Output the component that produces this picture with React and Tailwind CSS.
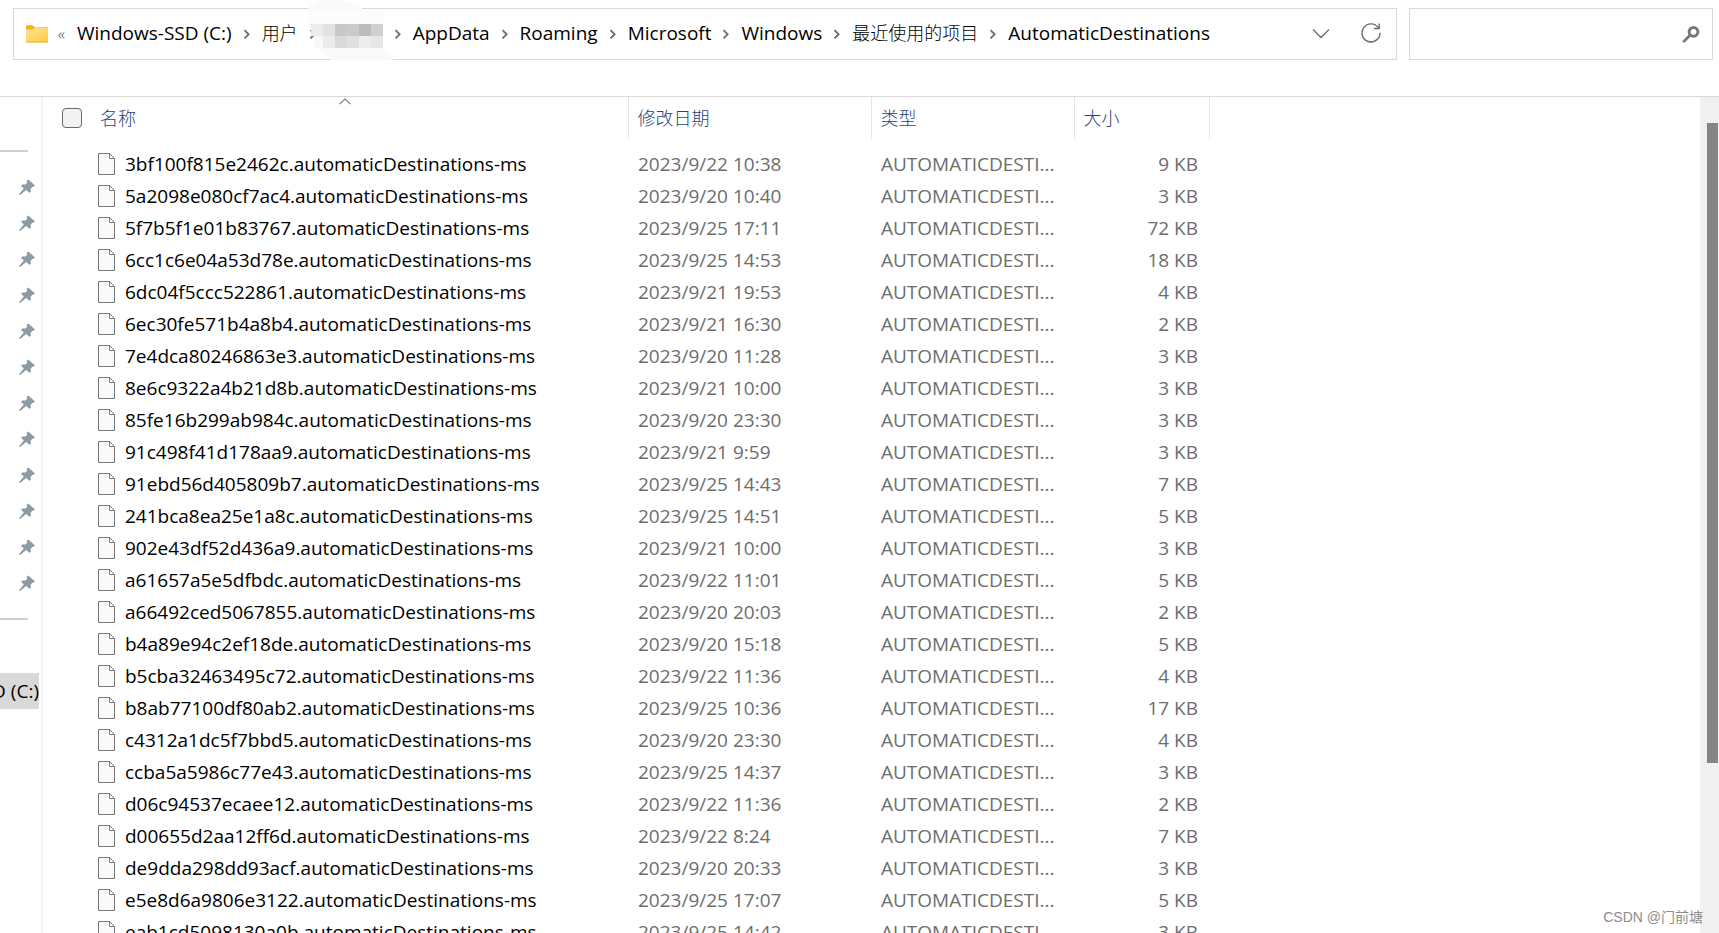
const files = [
  ['3bf100f815e2462c', '2023/9/22 10:38', 9],
  ['5a2098e080cf7ac4', '2023/9/20 10:40', 3],
  ['5f7b5f1e01b83767', '2023/9/25 17:11', 72],
  ['6cc1c6e04a53d78e', '2023/9/25 14:53', 18],
  ['6dc04f5ccc522861', '2023/9/21 19:53', 4],
  ['6ec30fe571b4a8b4', '2023/9/21 16:30', 2],
  ['7e4dca80246863e3', '2023/9/20 11:28', 3],
  ['8e6c9322a4b21d8b', '2023/9/21 10:00', 3],
  ['85fe16b299ab984c', '2023/9/20 23:30', 3],
  ['91c498f41d178aa9', '2023/9/21 9:59', 3],
  ['91ebd56d405809b7', '2023/9/25 14:43', 7],
  ['241bca8ea25e1a8c', '2023/9/25 14:51', 5],
  ['902e43df52d436a9', '2023/9/21 10:00', 3],
  ['a61657a5e5dfbdc', '2023/9/22 11:01', 5],
  ['a66492ced5067855', '2023/9/20 20:03', 2],
  ['b4a89e94c2ef18de', '2023/9/20 15:18', 5],
  ['b5cba32463495c72', '2023/9/22 11:36', 4],
  ['b8ab77100df80ab2', '2023/9/25 10:36', 17],
  ['c4312a1dc5f7bbd5', '2023/9/20 23:30', 4],
  ['ccba5a5986c77e43', '2023/9/25 14:37', 3],
  ['d06c94537ecaee12', '2023/9/22 11:36', 2],
  ['d00655d2aa12ff6d', '2023/9/22 8:24', 7],
  ['de9dda298dd93acf', '2023/9/20 20:33', 3],
  ['e5e8d6a9806e3122', '2023/9/25 17:07', 5],
  ['eab1cd5098130a0b', '2023/9/25 14:42', 3],
];

const pins = Array.from({ length: 12 }, (_, i) => i);

function FolderIcon() {
  return (
    <svg width="22" height="18" viewBox="0 0 22 18" className="shrink-0" aria-hidden="true">
      <defs>
        <linearGradient id="folder" x1="0" y1="0" x2="1" y2="1">
          <stop offset="0" stopColor="#ffe69c" />
          <stop offset="1" stopColor="#ffc93c" />
        </linearGradient>
      </defs>
      <path d="M0 1.2Q0 .3 1 .3h5.6l2 1.9H22v4H0z" fill="#f8b31a" />
      <path d="M0 4.6h7L9 2.8h13v14.4H0z" fill="url(#folder)" />
      <path d="M0 16.5h22v1H0z" fill="#eeae25" />
    </svg>
  );
}

function Chevron() {
  return (
    <svg width="8" height="12" viewBox="0 0 8 12" className="shrink-0" aria-hidden="true">
      <path d="M1.5 2.2 5.6 6.3 1.5 10.4" fill="none" stroke="#6e6e6e" strokeWidth="1.9" />
    </svg>
  );
}

function PinIcon() {
  return (
    <svg width="16" height="16" viewBox="0 0 16 16" aria-hidden="true">
      <path
        d="M9.2.5 15.6 6l-.5 1.6-2 .3-1.5 2.1.3 2.6-1.4 1.5-3.2-3.2L1 15.9H.2v-1L4.8 9.4 2 6.7l1.3-1.3 3 .2 1.7-1.6-.1-2.5z"
        fill="#8f9ba3"
      />
    </svg>
  );
}

function FileIcon() {
  return (
    <svg width="18" height="22" viewBox="0 0 18 22" className="shrink-0" aria-hidden="true">
      <path d="M.5.5h11l5 5v16H.5z" fill="#fafafa" stroke="#787878" />
      <path d="M11.5.5v5h5" fill="none" stroke="#787878" />
    </svg>
  );
}

function RedactedName() {
  const top = ['#ececec', '#e2e2e2', '#c8c8c8', '#cacaca', '#bcbcbc', '#d0d0d0'];
  const bottom = ['#f8f8f8', '#ececec', '#dadada', '#e0e0e0', '#ededed', '#e6e6e6'];
  return (
    <svg
      width="90"
      height="62"
      viewBox="306 0 90 62"
      className="absolute -top-4 -left-1"
      aria-hidden="true"
    >
      <path d="M309 12V9Q312 3 321 0h22q12 3 20 8l1 4h22v12h-74z" fill="#fcfcfc" />
      <path d="M309 12V9Q312 3 321 0h22q12 3 20 8l1 4z" fill="#fafafa" />
      <path d="M315 36h69v12l10 10v2h-62q-12-6-17-24z" fill="#fafafa" />
      {top.map((c, i) => (
        <rect key={i} x={312 + i * 12} y="24" width="12" height="12" fill={c} />
      ))}
      {bottom.map((c, i) => (
        <rect key={i} x={i === 0 ? 316 : 312 + i * 12} y="36" width={i === 0 ? 8 : 12} height="12" fill={c} />
      ))}
    </svg>
  );
}

function Crumb({ cjk, children }) {
  return (
    <li className="flex items-center gap-[11px]">
      <Chevron />
      <a href="#" className={cjk ? 'pb-0.5 text-[18px] font-light whitespace-nowrap' : 'pb-0.5 whitespace-nowrap'}>
        {children}
      </a>
    </li>
  );
}

export default function App() {
  return (
    <div className="flex h-screen flex-col overflow-hidden bg-white font-['Open_Sans','Noto_Sans_CJK_SC',sans-serif] text-[19px] leading-7 text-black">
      <header className="flex shrink-0 gap-3 border-b border-[#d9d9d9] pt-2 pr-1.5 pb-9 pl-[13px]">
        <nav aria-label="路径" className="flex h-[52px] min-w-0 flex-1 items-center border border-[#d9d9d9] pr-[15px] pl-3">
          <FolderIcon />
          <span className="ml-2.5 text-[16px] leading-5 font-light text-[#444]">«</span>
          <ol className="ml-3 flex items-center gap-[11px]">
            <li className="flex items-center"><a href="#" className="pb-0.5 whitespace-nowrap">Windows-SSD (C:)</a></li>
            <Crumb cjk>用户</Crumb>
            <li className="relative flex h-9 w-[74px] items-center">
              <Chevron />
              <RedactedName />
            </li>
            <Crumb>AppData</Crumb>
            <Crumb>Roaming</Crumb>
            <Crumb>Microsoft</Crumb>
            <Crumb>Windows</Crumb>
            <Crumb cjk>最近使用的项目</Crumb>
            <Crumb>AutomaticDestinations</Crumb>
          </ol>
          <button type="button" aria-label="展开" className="ml-auto">
            <svg width="18" height="12" viewBox="0 0 18 12" aria-hidden="true">
              <path d="m1 1.5 8 8 8-8" fill="none" stroke="#6e6e6e" strokeWidth="1.4" />
            </svg>
          </button>
          <button type="button" aria-label="刷新" className="ml-[31px] pb-0.5">
            <svg width="20" height="20" viewBox="0 0 20 20" className="block" aria-hidden="true">
              <path d="M19 9.8a9 9 0 1 1-1.6-5M18.2.5v5h-5.4" fill="none" stroke="#6e6e6e" strokeWidth="1.4" />
            </svg>
          </button>
        </nav>
        <form role="search" className="flex h-[52px] w-[304px] items-center border border-[#d9d9d9] pr-3">
          <input type="search" aria-label="搜索" className="h-full min-w-0 flex-1 px-3 outline-none" />
          <button type="button" aria-label="开始搜索">
            <svg width="18" height="18" viewBox="0 0 18 18" className="block" aria-hidden="true">
              <circle cx="11.5" cy="6.8" r="4.4" fill="none" stroke="#777" strokeWidth="3" />
              <path d="m8 10.3-6 6" stroke="#777" strokeWidth="2.8" strokeLinecap="round" />
            </svg>
          </button>
        </form>
      </header>

      <div className="flex min-h-0 flex-1">
        <aside className="w-[43px] shrink-0 overflow-hidden border-r-2 border-[#f5f5f5] pt-[53px]">
          <hr className="w-7 border-t-2 border-[#d0d0d0]" />
          <ul className="my-[17px] pl-[19px]">
            {pins.map((i) => (
              <li key={i} className="flex h-9 items-center">
                <PinIcon />
              </li>
            ))}
          </ul>
          <hr className="w-7 border-t-2 border-[#d0d0d0]" />
          <a href="#" className="mt-[53px] flex h-9 w-[39px] items-center justify-end overflow-hidden bg-[#d9d9d9] whitespace-nowrap">
            Windows-SSD (C:)
          </a>
        </aside>

        <main className="min-w-0 flex-1 overflow-hidden pl-[19px]">
          <table className="w-[1147px] table-fixed border-collapse text-left">
            <thead className="text-[18px] text-[#27437a]">
              <tr className="h-[42px]">
                <th className="relative w-[566px] border-r border-[#e5e5e5] font-light">
                  <div className="flex items-center gap-[18px]">
                    <input
                      type="checkbox"
                      aria-label="全选"
                      className="size-5 appearance-none rounded border border-[#6a6a6a] bg-[#f3f3f3]"
                    />
                    名称
                  </div>
                  <svg width="12" height="7" viewBox="0 0 12 7" className="absolute top-px left-1/2 -translate-x-1/2" aria-hidden="true">
                    <path d="M.6 6.2 6 .9l5.4 5.3" fill="none" stroke="#6e6e6e" strokeWidth="1.1" />
                  </svg>
                </th>
                <th className="w-[243px] border-r border-[#e5e5e5] pl-[9px] font-light">修改日期</th>
                <th className="w-[203px] border-r border-[#e5e5e5] pl-[9px] font-light">类型</th>
                <th className="w-[135px] border-r border-[#e5e5e5] pl-[9px] font-light">大小</th>
              </tr>
            </thead>
            <tbody className="text-[#6d6d6d] before:block before:h-[9px]">
              {files.map(([id, date, size]) => (
                <tr key={id} className="h-8">
                  <td className="pl-9 text-black">
                    <div className="flex items-center gap-[9px] whitespace-nowrap">
                      <FileIcon />
                      {id}.automaticDestinations-ms
                    </div>
                  </td>
                  <td className="pl-2.5 whitespace-nowrap">{date}</td>
                  <td className="pl-2.5 whitespace-nowrap">AUTOMATICDESTI...</td>
                  <td className="pr-[11px] text-right whitespace-nowrap">{size} KB</td>
                </tr>
              ))}
            </tbody>
          </table>
        </main>

        <div className="w-[19px] shrink-0 bg-[#f0f0f0] pt-[26px] pl-[7px]">
          <div className="h-[79%] w-[11px] bg-[#858585]" />
        </div>
      </div>

      <p className="absolute right-4 bottom-1.5 font-['Liberation_Sans','Noto_Sans_CJK_SC',sans-serif] text-[14px] leading-5 text-[#8c8c8c]">
        CSDN @门前塘
      </p>
    </div>
  );
}
